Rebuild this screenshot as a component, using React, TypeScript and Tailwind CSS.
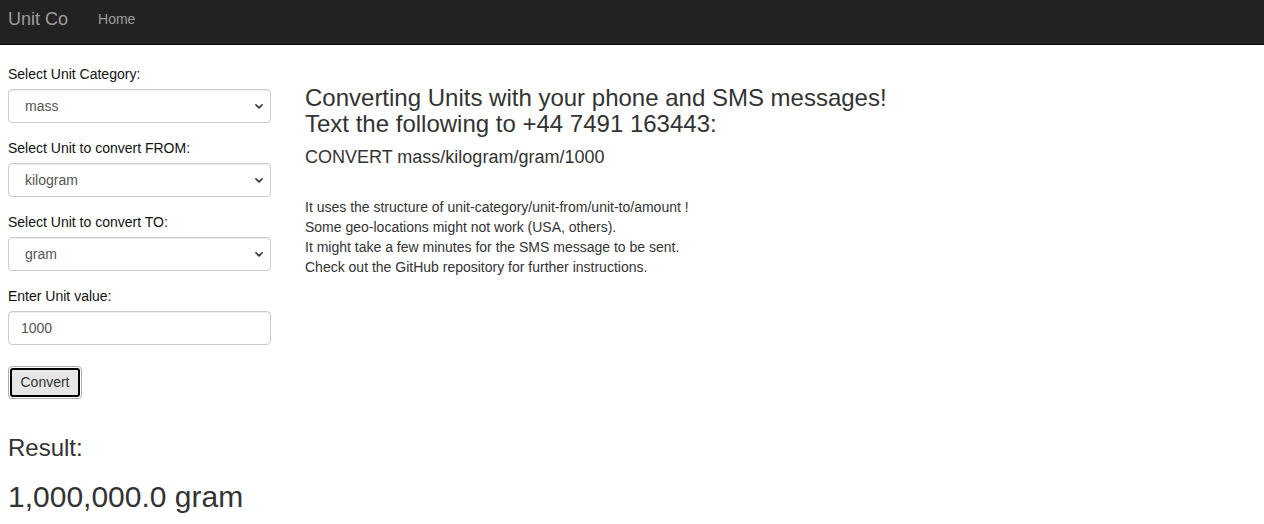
import React from 'react';

const font = { fontFamily: '"Liberation Sans", Arial, sans-serif' };

function Chevron() {
  return (
    <svg className="w-[10px] h-[10px]" viewBox="0 0 16 16" fill="none">
      <path d="M3 6l5 5 5-5" stroke="#333" strokeWidth="2.6" strokeLinecap="round" strokeLinejoin="round" />
    </svg>
  );
}

function SelectBox({ value }: { value: string }) {
  return (
    <div className="h-[34px] w-[263px] border border-[#ccc] rounded-[4px] bg-white flex items-center justify-between pl-[16px] pr-[6px] text-[14px] text-[#555] shadow-[inset_0_1px_1px_rgba(0,0,0,0.075)]">
      <span>{value}</span>
      <Chevron />
    </div>
  );
}

function Field({ label, children }: { label: string; children: React.ReactNode }) {
  return (
    <div className="mb-[15px]">
      <div className="text-[14px] font-medium text-[#111] leading-[20px] mb-[5px]">{label}</div>
      {children}
    </div>
  );
}

export default function App() {
  return (
    <div className="min-h-screen bg-white text-[#333]" style={font}>
      {/* Navbar */}
      <nav className="h-[45px] bg-[#222] border-b border-[#080808] flex items-center pb-[6px]">
        <span className="ml-[8px] text-[18px] text-[#9d9d9d] leading-none">Unit Co</span>
        <span className="ml-[30px] text-[14px] text-[#9d9d9d]">Home</span>
      </nav>

      <div className="flex pl-[8px] pt-[19px]">
        {/* Form */}
        <div className="w-[263px] shrink-0">
          <Field label="Select Unit Category:">
            <SelectBox value="mass" />
          </Field>
          <Field label="Select Unit to convert FROM:">
            <SelectBox value="kilogram" />
          </Field>
          <Field label="Select Unit to convert TO:">
            <SelectBox value="gram" />
          </Field>
          <Field label="Enter Unit value:">
            <div className="h-[34px] w-[263px] border border-[#ccc] rounded-[4px] flex items-center pl-[12px] text-[14px] text-[#555] shadow-[inset_0_1px_1px_rgba(0,0,0,0.075)]">
              1000
            </div>
          </Field>
          <div className="mt-[21px] w-[74px] h-[33px] border border-[#adadad] rounded-[4px] p-[1px]">
            <div className="w-full h-full border-2 border-black rounded-[3px] bg-[#e6e6e6] flex items-center justify-center text-[14px] text-[#333]">
              Convert
            </div>
          </div>
          <div className="mt-[36px] text-[24px] leading-[26px]">Result:</div>
          <div className="mt-[19px] text-[30px] leading-[33px]">1,000,000.0 gram</div>
        </div>

        {/* Info */}
        <div className="ml-[34px] pt-[21px]">
          <h3 className="text-[24px] leading-[26px]">
            Converting Units with your phone and SMS messages!
            <br />
            Text the following to +44 7491 163443:
          </h3>
          <div className="mt-[10px] text-[18px] leading-[20px]">CONVERT mass/kilogram/gram/1000</div>
          <p className="mt-[30px] text-[14px] leading-[20px]">
            It uses the structure of unit-category/unit-from/unit-to/amount !
            <br />
            Some geo-locations might not work (USA, others).
            <br />
            It might take a few minutes for the SMS message to be sent.
            <br />
            Check out the GitHub repository for further instructions.
          </p>
        </div>
      </div>
    </div>
  );
}
